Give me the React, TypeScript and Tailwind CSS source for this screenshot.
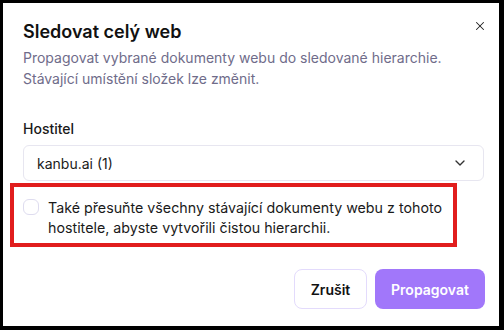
import { X, ChevronDown } from "lucide-react";

export default function App() {
  return (
    <div className="h-[330px] w-[504px] bg-black pb-[4px] pl-[3px] pr-[5px] pt-[3px] font-['Inter',sans-serif]">
      <div className="relative flex h-full flex-col bg-white pl-5 pr-[15px] pt-[15px]">
        <button className="absolute right-[9px] top-[13px] flex h-5 w-5 items-center justify-center text-[#222]">
          <X className="h-[14px] w-[14px]" strokeWidth={1.8} />
        </button>

        <h2 className="text-[18px] font-semibold leading-7 text-[#111]">
          Sledovat celý web
        </h2>
        <p className="mt-px text-[14px] leading-[21px] text-[#6f6c8a]">
          Propagovat vybrané dokumenty webu do sledované hierarchie.
          <br />
          Stávající umístění složek lze změnit.
        </p>

        <label className="mt-[30px] text-[14px] font-medium leading-5 text-[#1a1a1a]">
          Hostitel
        </label>
        <div className="mt-[6px] flex h-[36px] items-center justify-between rounded-md border border-[#e7e6f0] pl-[13px] pr-[15px]">
          <span className="text-[14px] text-[#1a1a1a]">kanbu.ai (1)</span>
          <ChevronDown className="h-4 w-4 text-[#333]" strokeWidth={2} />
        </div>

        {/* checkbox row, highlighted */}
        <div className="-ml-[13px] mt-[2px] w-[447px] border-4 border-[#e11d1d] pb-[5px] pl-[9px] pt-[11px]">
          <div className="flex items-start gap-[9px]">
            <span className="mt-px h-4 w-4 shrink-0 rounded-[6px] border border-[#dedcef] bg-white" />
            <p className="text-[14.25px] leading-5 text-[#1a1a1a]">
              Také přesuňte všechny stávající dokumenty webu z tohoto hostitele,
              abyste vytvořili čistou hierarchii.
            </p>
          </div>
        </div>

        <div className="mt-[22px] flex justify-end gap-2">
          <button className="h-10 w-[73px] rounded-lg border border-[#e3dbfc] bg-white text-[14px] font-semibold text-[#111]">
            Zrušit
          </button>
          <button className="-mr-px h-10 w-[110px] rounded-lg bg-[#a177fa] text-[14px] font-semibold text-white">
            Propagovat
          </button>
        </div>
      </div>
    </div>
  );
}
